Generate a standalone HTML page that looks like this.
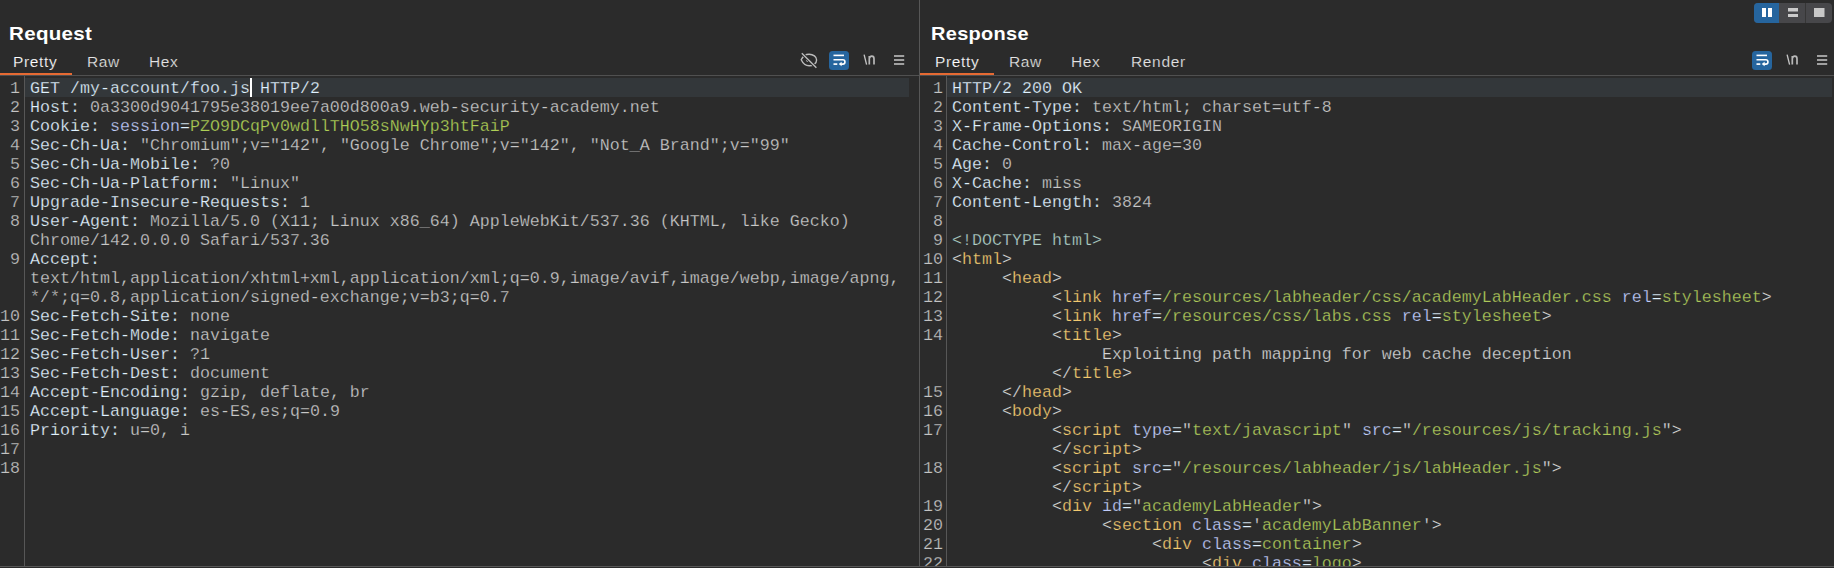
<!DOCTYPE html>
<html><head><meta charset="utf-8">
<style>
html,body{margin:0;padding:0}
body{width:1834px;height:568px;background:#2b2b2b;position:relative;overflow:hidden;font-family:"Liberation Sans",sans-serif}
.abs{position:absolute}
.title{position:absolute;top:22px;font-weight:bold;font-size:19px;color:#fff;letter-spacing:0.3px;line-height:24px;transform-origin:0 0}
.tab{position:absolute;top:52px;font-size:15.5px;color:#e4e4e4;line-height:19px;letter-spacing:0.65px;-webkit-text-stroke:0.2px #2b2b2b}
.tab.sel{color:#ffffff}
.uline{position:absolute;top:73px;height:2px;background:#e66a33}
.hsep{position:absolute;top:75px;height:1px;background:#505050}
.vline{position:absolute;width:1px;background:#575757}
.mono{font-family:"Liberation Mono",monospace;font-size:16.664px;line-height:19px;-webkit-text-stroke:0.25px #2b2b2b}
.code div:first-child{-webkit-text-stroke-color:#33373a}
.gut{position:absolute;top:79px;color:#c4c4c4;text-align:right}
.code{position:absolute;top:79px;color:#cfcfcf;white-space:pre}
.gut div,.code div{height:19px}
.cur{position:absolute;background:#33373a;top:78px;height:19px}
.hn{color:#e0f2ff} .hv{color:#c8c8c8} .cn{color:#c0ccfa} .eq{color:#e0f2ff} .cv{color:#aed056}
.p{color:#d8d8d8} .tg{color:#f4ca70} .an{color:#c0ccfa} .av{color:#aec85a} .tx{color:#d4d4d4} .dt{color:#aecec6}
.caret{display:inline-block;width:0;height:0;vertical-align:top}
svg{position:absolute;overflow:visible}
</style></head><body>
<!-- left panel -->
<div class="title" style="left:9px;transform:scaleX(1.08)">Request</div>
<div class="tab sel" style="left:13px">Pretty</div>
<div class="tab" style="left:87px">Raw</div>
<div class="tab" style="left:149px">Hex</div>
<div class="hsep" style="left:0;width:919px"></div>
<div class="uline" style="left:0;width:72px"></div>
<div class="cur" style="left:25px;width:884px"></div>
<div class="abs" style="left:250px;top:78px;width:2px;height:19px;background:#fff"></div>
<div class="vline" style="left:24px;top:76px;height:490px"></div>
<div class="gut mono" style="left:0;width:20px"><div>1</div><div>2</div><div>3</div><div>4</div><div>5</div><div>6</div><div>7</div><div>8</div><div></div><div>9</div><div></div><div></div><div>10</div><div>11</div><div>12</div><div>13</div><div>14</div><div>15</div><div>16</div><div>17</div><div>18</div></div>
<div class="code mono" style="left:30px"><div><span class="hn">GET /my-account/foo.js</span><span class="caret"></span><span class="hn"> HTTP/2</span></div><div><span class="hn">Host:</span> <span class="hv">0a3300d9041795e38019ee7a00d800a9.web-security-academy.net</span></div><div><span class="hn">Cookie:</span> <span class="cn">session</span><span class="eq">=</span><span class="cv">PZO9DCqPv0wdllTHO58sNwHYp3htFaiP</span></div><div><span class="hn">Sec-Ch-Ua:</span> <span class="hv">"Chromium";v="142", "Google Chrome";v="142", "Not_A Brand";v="99"</span></div><div><span class="hn">Sec-Ch-Ua-Mobile:</span> <span class="hv">?0</span></div><div><span class="hn">Sec-Ch-Ua-Platform:</span> <span class="hv">"Linux"</span></div><div><span class="hn">Upgrade-Insecure-Requests:</span> <span class="hv">1</span></div><div><span class="hn">User-Agent:</span> <span class="hv">Mozilla/5.0 (X11; Linux x86_64) AppleWebKit/537.36 (KHTML, like Gecko)</span></div><div><span class="hv">Chrome/142.0.0.0 Safari/537.36</span></div><div><span class="hn">Accept:</span></div><div><span class="hv">text/html,application/xhtml+xml,application/xml;q=0.9,image/avif,image/webp,image/apng,</span></div><div><span class="hv">*/*;q=0.8,application/signed-exchange;v=b3;q=0.7</span></div><div><span class="hn">Sec-Fetch-Site:</span> <span class="hv">none</span></div><div><span class="hn">Sec-Fetch-Mode:</span> <span class="hv">navigate</span></div><div><span class="hn">Sec-Fetch-User:</span> <span class="hv">?1</span></div><div><span class="hn">Sec-Fetch-Dest:</span> <span class="hv">document</span></div><div><span class="hn">Accept-Encoding:</span> <span class="hv">gzip, deflate, br</span></div><div><span class="hn">Accept-Language:</span> <span class="hv">es-ES,es;q=0.9</span></div><div><span class="hn">Priority:</span> <span class="hv">u=0, i</span></div><div></div><div></div></div>

<!-- left icons -->
<svg style="left:800px;top:52px" width="18" height="17" viewBox="0 0 18 17">
  <path d="M1.2 7.8 C3.2 3.6, 6.2 2.2, 9.2 2.2 C13.2 2.2, 16.6 4.8, 16.6 7.9 C16.6 11.2, 13.2 13.8, 9.2 13.8 C6.2 13.8, 3.2 12, 1.2 7.8 Z" fill="none" stroke="#bcbcbc" stroke-width="1.4"/>
  <circle cx="7.6" cy="8.6" r="1.4" fill="#bcbcbc"/>
  <path d="M1.8 1.2 L16.4 15.8" stroke="#2b2b2b" stroke-width="3.2"/>
  <path d="M1.8 1.2 L16.4 15.8" stroke="#bcbcbc" stroke-width="1.4"/>
</svg>
<svg style="left:829px;top:51px" width="20" height="19" viewBox="0 0 20 19">
  <rect x="0" y="0" width="20" height="19" rx="3.5" fill="#26659e"/>
  <path d="M4.5 4.4 H15" stroke="#fff" stroke-width="1.6"/>
  <path d="M4.5 8.8 H13.8 A2.15 2.15 0 0 1 13.8 13.1 H12" fill="none" stroke="#fff" stroke-width="1.6"/>
  <path d="M4.5 13.1 H8.3" stroke="#fff" stroke-width="1.7"/>
  <path d="M9.7 13.1 L12.6 10.8 L12.6 15.3 Z" fill="#fff"/>
</svg>
<svg style="left:862px;top:54px" width="14" height="12" viewBox="0 0 14 12">
  <path d="M2.1 0.7 L4.6 10.7" stroke="#c4c4c4" stroke-width="1.3"/>
  <path d="M7.3 10.6 V2 M7.3 4.6 Q7.8 2.2 9.8 2.2 Q12 2.2 12 4.8 V10.6" fill="none" stroke="#b8b8b8" stroke-width="1.7"/>
</svg>
<svg style="left:894px;top:55px" width="11" height="10" viewBox="0 0 11 10">
  <rect x="0" y="0" width="10.2" height="2" fill="#a0a0a0"/>
  <rect x="0" y="4" width="10.2" height="2" fill="#a0a0a0"/>
  <rect x="0" y="8" width="10.2" height="2" fill="#a0a0a0"/>
</svg>

<!-- divider -->
<div class="vline" style="left:919px;top:0;height:568px"></div>

<!-- right panel -->
<div class="title" style="left:931px;transform:scaleX(1.05)">Response</div>
<div class="tab sel" style="left:935px">Pretty</div>
<div class="tab" style="left:1009px">Raw</div>
<div class="tab" style="left:1071px">Hex</div>
<div class="tab" style="left:1131px">Render</div>
<div class="hsep" style="left:920px;width:914px"></div>
<div class="uline" style="left:920px;width:74px"></div>
<div class="cur" style="left:947px;width:885px"></div>
<div class="vline" style="left:946px;top:76px;height:490px"></div>
<div class="gut mono" style="left:920px;width:23px"><div>1</div><div>2</div><div>3</div><div>4</div><div>5</div><div>6</div><div>7</div><div>8</div><div>9</div><div>10</div><div>11</div><div>12</div><div>13</div><div>14</div><div></div><div></div><div>15</div><div>16</div><div>17</div><div></div><div>18</div><div></div><div>19</div><div>20</div><div>21</div><div>22</div></div>
<div class="code mono" style="left:952px"><div><span class="hn">HTTP/2 200 OK</span></div><div><span class="hn">Content-Type:</span> <span class="hv">text/html; charset=utf-8</span></div><div><span class="hn">X-Frame-Options:</span> <span class="hv">SAMEORIGIN</span></div><div><span class="hn">Cache-Control:</span> <span class="hv">max-age=30</span></div><div><span class="hn">Age:</span> <span class="hv">0</span></div><div><span class="hn">X-Cache:</span> <span class="hv">miss</span></div><div><span class="hn">Content-Length:</span> <span class="hv">3824</span></div><div></div><div><span class="dt">&lt;!DOCTYPE html&gt;</span></div><div><span class="p">&lt;</span><span class="tg">html</span><span class="p">&gt;</span></div><div>     <span class="p">&lt;</span><span class="tg">head</span><span class="p">&gt;</span></div><div>          <span class="p">&lt;</span><span class="tg">link</span> <span class="an">href</span><span class="eq">=</span><span class="av">/resources/labheader/css/academyLabHeader.css</span> <span class="an">rel</span><span class="eq">=</span><span class="av">stylesheet</span><span class="p">&gt;</span></div><div>          <span class="p">&lt;</span><span class="tg">link</span> <span class="an">href</span><span class="eq">=</span><span class="av">/resources/css/labs.css</span> <span class="an">rel</span><span class="eq">=</span><span class="av">stylesheet</span><span class="p">&gt;</span></div><div>          <span class="p">&lt;</span><span class="tg">title</span><span class="p">&gt;</span></div><div>               <span class="tx">Exploiting path mapping for web cache deception</span></div><div>          <span class="p">&lt;/</span><span class="tg">title</span><span class="p">&gt;</span></div><div>     <span class="p">&lt;/</span><span class="tg">head</span><span class="p">&gt;</span></div><div>     <span class="p">&lt;</span><span class="tg">body</span><span class="p">&gt;</span></div><div>          <span class="p">&lt;</span><span class="tg">script</span> <span class="an">type</span><span class="eq">=</span><span class="p">"</span><span class="av">text/javascript</span><span class="p">"</span> <span class="an">src</span><span class="eq">=</span><span class="p">"</span><span class="av">/resources/js/tracking.js</span><span class="p">"</span><span class="p">&gt;</span></div><div>          <span class="p">&lt;/</span><span class="tg">script</span><span class="p">&gt;</span></div><div>          <span class="p">&lt;</span><span class="tg">script</span> <span class="an">src</span><span class="eq">=</span><span class="p">"</span><span class="av">/resources/labheader/js/labHeader.js</span><span class="p">"</span><span class="p">&gt;</span></div><div>          <span class="p">&lt;/</span><span class="tg">script</span><span class="p">&gt;</span></div><div>          <span class="p">&lt;</span><span class="tg">div</span> <span class="an">id</span><span class="eq">=</span><span class="p">"</span><span class="av">academyLabHeader</span><span class="p">"</span><span class="p">&gt;</span></div><div>               <span class="p">&lt;</span><span class="tg">section</span> <span class="an">class</span><span class="eq">=</span><span class="p">'</span><span class="av">academyLabBanner</span><span class="p">'</span><span class="p">&gt;</span></div><div>                    <span class="p">&lt;</span><span class="tg">div</span> <span class="an">class</span><span class="eq">=</span><span class="av">container</span><span class="p">&gt;</span></div><div>                         <span class="p">&lt;</span><span class="tg">div</span> <span class="an">class</span><span class="eq">=</span><span class="av">logo</span><span class="p">&gt;</span></div></div>

<!-- right icons -->
<svg style="left:1752px;top:51px" width="20" height="19" viewBox="0 0 20 19">
  <rect x="0" y="0" width="20" height="19" rx="3.5" fill="#26659e"/>
  <path d="M4.5 4.4 H15" stroke="#fff" stroke-width="1.6"/>
  <path d="M4.5 8.8 H13.8 A2.15 2.15 0 0 1 13.8 13.1 H12" fill="none" stroke="#fff" stroke-width="1.6"/>
  <path d="M4.5 13.1 H8.3" stroke="#fff" stroke-width="1.7"/>
  <path d="M9.7 13.1 L12.6 10.8 L12.6 15.3 Z" fill="#fff"/>
</svg>
<svg style="left:1785px;top:54px" width="14" height="12" viewBox="0 0 14 12">
  <path d="M2.1 0.7 L4.6 10.7" stroke="#c4c4c4" stroke-width="1.3"/>
  <path d="M7.3 10.6 V2 M7.3 4.6 Q7.8 2.2 9.8 2.2 Q12 2.2 12 4.8 V10.6" fill="none" stroke="#b8b8b8" stroke-width="1.7"/>
</svg>
<svg style="left:1817px;top:55px" width="11" height="10" viewBox="0 0 11 10">
  <rect x="0" y="0" width="10.2" height="2" fill="#a0a0a0"/>
  <rect x="0" y="4" width="10.2" height="2" fill="#a0a0a0"/>
  <rect x="0" y="8" width="10.2" height="2" fill="#a0a0a0"/>
</svg>

<!-- layout toggle -->
<svg style="left:1754px;top:3px" width="78" height="20" viewBox="0 0 78 20">
  <defs><clipPath id="grp"><rect x="0" y="0" width="78" height="20" rx="4"/></clipPath></defs>
  <g clip-path="url(#grp)">
    <rect x="0" y="0" width="78" height="20" fill="#47474a"/>
    <rect x="0" y="0" width="25" height="20" fill="#26659e"/>
    <rect x="51" y="0" width="1" height="20" fill="#363636"/>
  </g>
  <rect x="8" y="5" width="4" height="9" fill="#fff"/>
  <rect x="14" y="5" width="4" height="9" fill="#fff"/>
  <rect x="34" y="5" width="10" height="3.5" fill="#cbcbcb"/>
  <rect x="34" y="11" width="10" height="3" fill="#cbcbcb"/>
  <rect x="60" y="5" width="10.5" height="9" fill="#c8c8c8"/>
</svg>

<!-- bottom line -->
<div class="abs" style="left:0;top:567px;width:1834px;height:1px;background:#2b2b2b"></div>
<div class="abs" style="left:0;top:566px;width:1834px;height:1px;background:#575757"></div>
</body></html>
